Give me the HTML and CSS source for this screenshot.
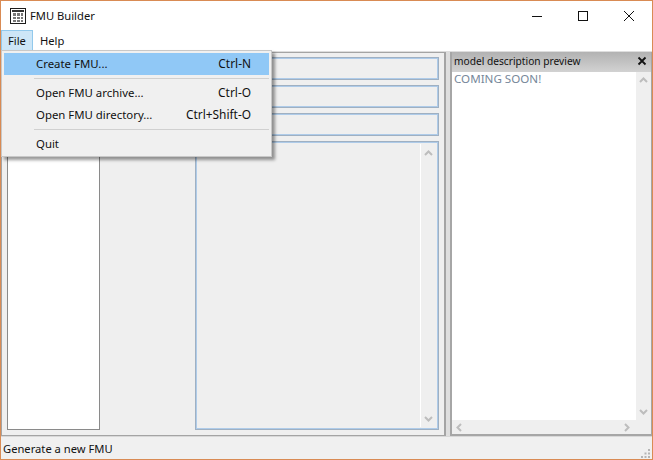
FILE: index.html
```html
<!DOCTYPE html>
<html lang="en">
<head>
<meta charset="utf-8">
<title>FMU Builder</title>
<link rel="stylesheet" href="styles.css">
</head>
<body>
<div class="window">
  <header class="titlebar">
    <svg class="app-icon" width="16" height="16" viewBox="0 0 16 16">
      <rect x="0.5" y="0.5" width="15" height="15" fill="#fff" stroke="#1c1c1c"/>
      <path d="M2 2h12v2H2z" fill="#333"/>
      <path d="M3 5h3v3H3zM7 5h3v3H7zM11 5h2v3h-2zM3 9h3v2H3zM7 9h3v2H7zM11 9h2v2h-2zM3 12h3v2H3zM7 12h3v2H7zM11 12h2v2h-2z" fill="#777"/>
    </svg>
    <span class="title">FMU Builder</span>
    <div class="controls">
      <svg class="ctl" width="46" height="30" viewBox="0 0 46 30"><path d="M18 15.500h10" stroke="#111"/></svg>
      <svg class="ctl" width="46" height="30" viewBox="0 0 46 30"><rect x="18.500" y="10.500" width="9" height="9" fill="none" stroke="#111"/></svg>
      <svg class="ctl" width="46" height="30" viewBox="0 0 46 30"><path d="M18 10l10 10M28 10L18 20" stroke="#111" fill="none"/></svg>
    </div>
  </header>
  <nav class="menubar">
    <span class="menu-item active">File</span>
    <span class="menu-item">Help</span>
  </nav>
  <main class="workspace">
    <section class="main-panel">
      <div class="list-box"></div>
      <div class="fields">
        <div class="field"></div>
        <div class="field"></div>
        <div class="field"></div>
        <div class="field big">
          <div class="vscroll plain">
            <svg width="9" height="6" viewBox="0 0 9 6"><path d="M1 5l3.500-3.500L8 5" class="chev"/></svg>
            <svg width="9" height="6" viewBox="0 0 9 6"><path d="M1 1l3.500 3.500L8 1" class="chev"/></svg>
          </div>
        </div>
      </div>
    </section>
    <aside class="dock">
      <div class="dock-head">
        <span>model description preview</span>
        <svg width="10" height="10" viewBox="0 0 10 10"><path d="M1.500 1.500l7 7M8.500 1.500l-7 7" stroke="#111" stroke-width="1.800" fill="none"/></svg>
      </div>
      <div class="dock-body">
        <div class="doc">COMING SOON!</div>
        <div class="vscroll">
          <svg width="9" height="6" viewBox="0 0 9 6"><path d="M1 5l3.500-3.500L8 5" class="chev"/></svg>
          <svg width="9" height="6" viewBox="0 0 9 6"><path d="M1 1l3.500 3.500L8 1" class="chev"/></svg>
        </div>
        <div class="hscroll">
          <svg width="6" height="9" viewBox="0 0 6 9"><path d="M5 1L1.500 4.500 5 8" class="chev"/></svg>
          <svg width="6" height="9" viewBox="0 0 6 9"><path d="M1 1l3.500 3.500L1 8" class="chev"/></svg>
        </div>
      </div>
    </aside>
  </main>
  <footer class="statusbar">
    <span>Generate a new FMU</span>
    <svg class="grip" width="10" height="10" viewBox="0 0 10 10"><path d="M7 0h2v2H7zM3.500 3.500h2v2h-2zM7 3.500h2v2H7zM0 7h2v2H0zM3.500 7h2v2h-2zM7 7h2v2H7z" fill="#b5b5b5"/></svg>
  </footer>
  <div class="dropdown">
    <div class="row selected"><span>Create FMU...</span><span class="key">Ctrl-N</span></div>
    <div class="sep"></div>
    <div class="row"><span>Open FMU archive...</span><span class="key">Ctrl-O</span></div>
    <div class="row"><span>Open FMU directory...</span><span class="key">Ctrl+Shift-O</span></div>
    <div class="sep"></div>
    <div class="row"><span>Quit</span></div>
  </div>
</div>
</body>
</html>
```
FILE: styles.css
```css
* { box-sizing: border-box; }
html, body { margin: 0; padding: 0; }
body { width: 653px; height: 460px; overflow: hidden; font: 11.200px "Noto Sans", "Open Sans", sans-serif; color: #111; }
.window { position: relative; width: 653px; height: 460px; border: 1px solid #d98b54; display: flex; flex-direction: column; background: #fff; }
.titlebar { height: 29px; display: flex; align-items: center; padding-left: 9px; flex: none; }
.app-icon { margin-right: 4px; }
.controls { margin-left: auto; display: flex; }
.ctl { display: block; }
.menubar { height: 21px; display: flex; flex: none; background: #fff; align-items: stretch; }
.menu-item { padding: 0 6px; line-height: 19px; border: 1px solid transparent; }
.menu-item.active { background: #cde6f7; border-color: #92c9ec; }
.workspace { height: 385px; flex: none; display: flex; background: #dedede; padding-top: 1px; }
.main-panel { width: 445px; border: 1px solid #a4a4a4; border-right-width: 2px; display: flex; padding: 4px 5px 5px 5px; background: #efefef; }
.list-box { width: 93px; background: #fff; border: 1px solid #8a8a8a; flex: none; margin-right: 95px; }
.fields { flex: 1; display: flex; flex-direction: column; gap: 5px; }
.field { height: 23px; border: 1px solid #9fb0c2; box-shadow: inset 0 0 0 1px #aecbe9; background: #efefef; flex: none; }
.big { flex: 1; display: flex; justify-content: flex-end; padding: 2px 2px 2px 0; }
.vscroll { width: 15px; display: flex; flex-direction: column; justify-content: space-between; align-items: center; padding: 5px 0; background: #efefef; flex: none; }
.vscroll.plain { border-left: 1px solid #fff; width: 16px; padding: 6px 0 5px; }
.chev { stroke: #bdbdbd; stroke-width: 2; fill: none; }
.dock { width: 202px; margin-left: 4px; border: 2px solid #a6a6a6; border-top-width: 0; border-right-width: 1px; display: flex; flex-direction: column; background: #efefef; }
.dock-head { height: 20px; display: flex; align-items: center; justify-content: space-between; padding: 0 4px 2px 2px; background: linear-gradient(#b2b2b2, #d2d2d2); flex: none; font-size: 10.200px; }
.dock-body { flex: 1; display: grid; grid-template-columns: 1fr 15px; grid-template-rows: 1fr 14px; }
.doc { background: #fff; color: #76879a; padding: 0 2px; line-height: 14px; font-size: 11.600px; }
.hscroll { display: flex; justify-content: space-between; align-items: center; padding: 0 6px 0 4px; }
.statusbar { flex: 1; display: flex; align-items: center; justify-content: space-between; padding: 0 1px 0 2px; background: #f0f0f0; border-top: 1px solid #d8d8d8; }
.grip { align-self: flex-end; }
.dropdown { position: absolute; left: 0; top: 49px; width: 271px; height: 107px; background: #f0f0f0; border: 1px solid #c8c8c8; padding: 2px; box-shadow: 3px 3px 3px rgba(0, 0, 0, 0.4); font-size: 11.400px; }
.row { height: 22px; display: flex; justify-content: space-between; align-items: center; padding: 0 18px 2px 32px; }
.row.selected { background: #90c8f6; }
.key { font-size: 11.900px; }
.sep { height: 1px; background: #d0d0d0; margin: 3px 0 3px 30px; }
```
